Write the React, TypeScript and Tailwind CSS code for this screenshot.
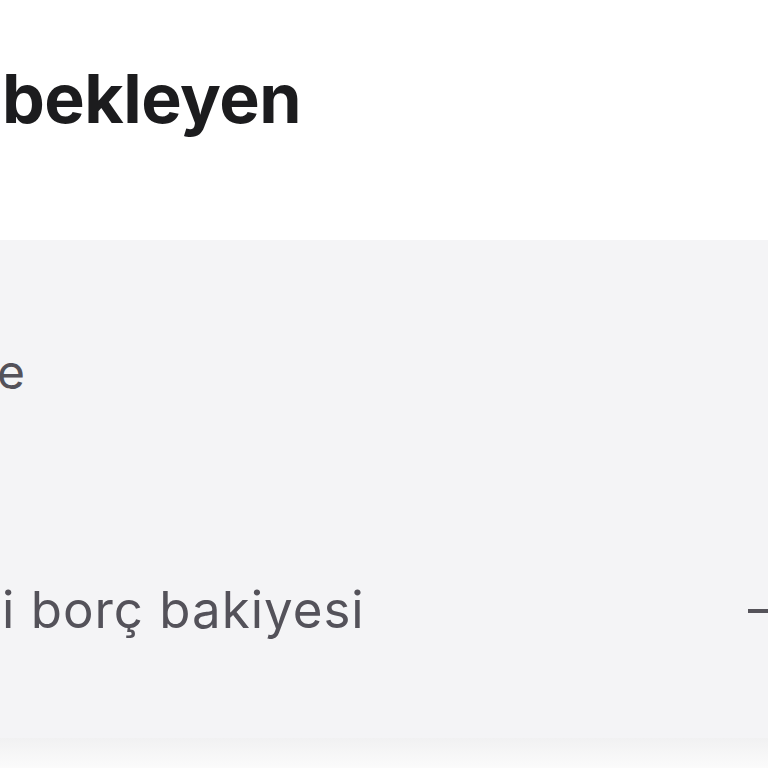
export default function App() {
  return (
    <div className="w-[768px] h-[768px] overflow-hidden bg-white flex flex-col" style={{ fontFamily: "Inter, 'Noto Sans', sans-serif" }}>
      <div className="h-[240px] shrink-0 flex flex-col">
        <div className="pt-[58px] pl-[2px] text-[68px] leading-[80px] font-bold text-[#1c1c1e] tracking-[-0.5px]">bekleyen</div>
      </div>
      <div className="h-[498px] shrink-0 bg-[#f4f4f6] flex flex-col">
        <div className="h-[264px] flex items-center">
          <span className="ml-[-3px] text-[48px] leading-[60px] text-[#54525a]">e</span>
        </div>
        <div className="h-[234px] flex items-start justify-between">
          <span className="ml-[2px] mt-[76px] text-[51px] leading-[60px] tracking-[1px] text-[#54525a]">i borç bakiyesi</span>
          <span className="mt-[105px] w-[22px] h-[4px] bg-[#55535a] mr-[-2px]"></span>
        </div>
      </div>
      <div className="flex-1 bg-gradient-to-b from-[#f1f1f2] to-[#fbfbfb]"></div>
    </div>
  );
}
